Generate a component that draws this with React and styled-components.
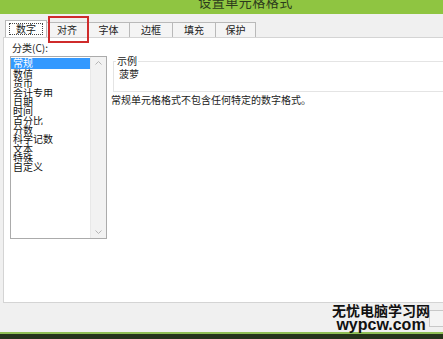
import React from 'react';
import styled, { createGlobalStyle } from 'styled-components';

const GlobalStyle = createGlobalStyle`
    html, body {
        margin: 0;
        padding: 0;
        background: #f0f0f0;
    }
    body {
        font-family: "Noto Sans CJK SC", "Noto Sans", sans-serif;
    }
`;

const Window = styled.div`
    position: relative;
    width: 443px;
    height: 339px;
    overflow: hidden;
    display: flex;
    flex-direction: column;
    background: #f0f0f0;
`;

const TitleBar = styled.div`
    height: 14px;
    flex: none;
    background: #8fc541;
    display: flex;
    justify-content: center;
    padding-left: 48px;
    overflow: hidden;
    span {
        font-size: 13px;
        line-height: 13px;
        margin-top: -5px;
        color: #2c3a1c;
        letter-spacing: 0.5px;
    }
`;

const TabRow = styled.div`
    flex: none;
    height: 17px;
    margin-top: 6px;
    padding-left: 5px;
    display: flex;
    align-items: flex-end;
`;

const Tab = styled.div`
    width: ${({ w }) => w}px;
    height: ${({ active }) => (active ? 17 : 15)}px;
    box-sizing: border-box;
    border: 1px solid #b9b9b9;
    border-left: ${({ first }) => (first ? '1px solid #b9b9b9' : 'none')};
    border-bottom: none;
    background: ${({ active }) => (active ? '#ffffff' : '#f4f4f4')};
    display: flex;
    align-items: center;
    justify-content: center;
    font-size: 10px;
    color: #222;
    span {
        padding: 0 6px;
        line-height: 10px;
        border: ${({ active }) => (active ? '1px dotted #444' : '1px solid transparent')};
    }
`;

const Panel = styled.div`
    flex: none;
    height: 266px;
    margin-left: 3px;
    box-sizing: border-box;
    background: #fff;
    border: 1px solid #d4d4d4;
    border-right: none;
    display: flex;
    padding: 5px 0 0 6px;
    gap: 6px;
`;

const LeftCol = styled.div`
    display: flex;
    flex-direction: column;
`;

const Label = styled.div`
    font-size: 10px;
    line-height: 10px;
    color: #222;
    padding-left: 2px;
    height: 13px;
`;

const ListBox = styled.div`
    width: 97px;
    height: 183px;
    box-sizing: border-box;
    border: 1px solid #ababab;
    display: flex;
`;

const Items = styled.div`
    flex: 1;
    padding-top: 1px;
`;

const Item = styled.div`
    font-size: 10px;
    line-height: 9.33px;
    height: ${({ selected }) => (selected ? 11 : 9.33)}px;
    padding-left: 2px;
    color: ${({ selected }) => (selected ? '#fff' : '#111')};
    background: ${({ selected }) => (selected ? '#3399ff' : 'transparent')};
    white-space: nowrap;
    overflow: hidden;
`;

const ScrollBar = styled.div`
    width: 15px;
    background: #f2f2f2;
    border-left: 1px solid #e8e8e8;
    display: flex;
    flex-direction: column;
    justify-content: space-between;
    align-items: center;
    padding: 4px 0;
    svg {
        display: block;
    }
`;

const RightCol = styled.div`
    flex: 1;
    display: flex;
    flex-direction: column;
    padding-top: 13px;
`;

const GroupBox = styled.div`
    position: relative;
    height: 22px;
    margin-top: 5px;
    border-top: 1px solid #e4e4e4;
    border-bottom: 1px solid #e4e4e4;
    border-left: 1px solid #e4e4e4;
    padding: 7px 0 0 5px;
    font-size: 10px;
    line-height: 10px;
    color: #222;
`;

const Legend = styled.span`
    position: absolute;
    top: -6px;
    left: 2px;
    background: #fff;
    padding: 0 1px;
    font-size: 10px;
    line-height: 10px;
`;

const Description = styled.div`
    font-size: 10px;
    line-height: 10px;
    color: #222;
    margin-top: 3px;
    margin-left: -2px;
`;

const Footer = styled.div`
    flex: 1;
    display: flex;
    justify-content: flex-end;
    padding-top: 7px;
`;

const FooterButton = styled.div`
    width: 14px;
    height: 17px;
    box-sizing: border-box;
    border: 1px solid #c8c8c8;
    border-right: none;
    background: #f4f4f4;
`;

const BottomEdge = styled.div`
    flex: none;
    height: 2px;
    background: #8fbf55;
    border-bottom: 5px solid #25331b;
`;

const Highlight = styled.div`
    position: absolute;
    left: 48px;
    top: 16px;
    width: 41px;
    height: 27px;
    box-sizing: border-box;
    border: 2px solid #cf2b2b;
`;

const Watermark = styled.div`
    position: absolute;
    right: 13px;
    bottom: 7px;
    display: flex;
    flex-direction: column;
    align-items: center;
    font-family: "Noto Sans CJK SC", "DejaVu Sans", sans-serif;
    font-weight: 700;
    color: #111;
    .cn {
        font-size: 14px;
        line-height: 15px;
    }
    .en {
        font-family: "Liberation Sans", Arial, sans-serif;
        font-size: 16px;
        line-height: 14px;
    }
`;

const tabs = [
    { name: '数字', w: 42 },
    { name: '对齐', w: 41 },
    { name: '字体', w: 42 },
    { name: '边框', w: 43 },
    { name: '填充', w: 43 },
    { name: '保护', w: 40 },
];

const categories = ['常规', '数值', '货币', '会计专用', '日期', '时间', '百分比', '分数', '科学记数', '文本', '特殊', '自定义'];

function Arrow({ up }) {
    return (
        <svg width="7" height="4" viewBox="0 0 7 4">
            <path d={up ? 'M0.5 3.5 L3.5 0.5 L6.5 3.5' : 'M0.5 0.5 L3.5 3.5 L6.5 0.5'} stroke="#b5b5b5" fill="none" />
        </svg>
    );
}

export default function App() {
    return (
        <Window>
            <GlobalStyle />
            <TitleBar><span>设置单元格格式</span></TitleBar>
            <TabRow>
                {tabs.map((t, i) => (
                    <Tab key={t.name} w={t.w} active={i === 0} first={i === 0}>
                        <span>{t.name}</span>
                    </Tab>
                ))}
            </TabRow>
            <Panel>
                <LeftCol>
                    <Label>分类(C):</Label>
                    <ListBox>
                        <Items>
                            {categories.map((c, i) => (
                                <Item key={c} selected={i === 0}>{c}</Item>
                            ))}
                        </Items>
                        <ScrollBar>
                            <Arrow up />
                            <Arrow />
                        </ScrollBar>
                    </ListBox>
                </LeftCol>
                <RightCol>
                    <GroupBox>
                        <Legend>示例</Legend>
                        菠萝
                    </GroupBox>
                    <Description>常规单元格格式不包含任何特定的数字格式。</Description>
                </RightCol>
            </Panel>
            <Footer>
                <FooterButton />
            </Footer>
            <BottomEdge />
            <Highlight />
            <Watermark>
                <span className="cn">无忧电脑学习网</span>
                <span className="en">wypcw.com</span>
            </Watermark>
        </Window>
    );
}
